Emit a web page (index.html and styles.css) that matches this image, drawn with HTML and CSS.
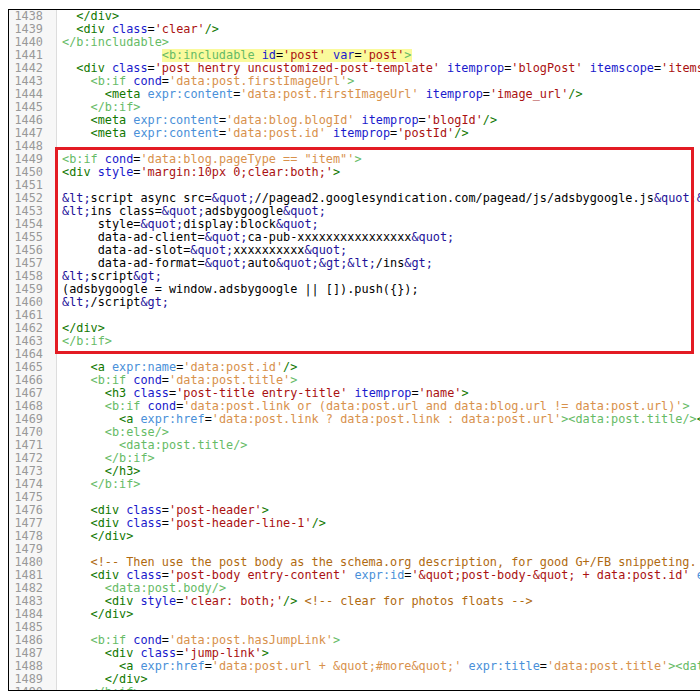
FILE: index.html
```html
<!DOCTYPE html>
<html lang="en">
<head>
    <meta charset="UTF-8">
    <meta name="viewport" content="width=device-width, initial-scale=1.0">
    <title>Template editor</title>
    <link rel="stylesheet" href="styles.css">
</head>
<body>
    <div class="editor">
        <div class="row"><div class="num">1438</div><div class="src">  <span class="tg">&lt;/div&gt;</span></div></div>
        <div class="row"><div class="num">1439</div><div class="src">  <span class="tg">&lt;div</span> <span class="at">class</span>=<span class="st">'clear'</span><span class="tg">/&gt;</span></div></div>
        <div class="row"><div class="num">1440</div><div class="src"><span class="bt">&lt;/b:includable&gt;</span></div></div>
        <div class="row"><div class="num">1441</div><div class="src">              <span class="hl"><span class="bt">&lt;b:includable</span> <span class="at">id</span>=<span class="st">'post'</span> <span class="at">var</span>=<span class="st">'post'</span><span class="bt">&gt;</span></span></div></div>
        <div class="row"><div class="num">1442</div><div class="src">  <span class="tg">&lt;div</span> <span class="at">class</span>=<span class="st">'post hentry uncustomized-post-template'</span> <span class="at">itemprop</span>=<span class="st">'blogPost'</span> <span class="at">itemscope</span>=<span class="st">'itemscope'</span> <span class="at">itemtype</span>=<span class="st">'http://schema.org/BlogPosting'</span><span class="tg">&gt;</span></div></div>
        <div class="row"><div class="num">1443</div><div class="src">    <span class="bt">&lt;b:if</span> <span class="at">cond</span>=<span class="ds">'data:post.firstImageUrl'</span><span class="bt">&gt;</span></div></div>
        <div class="row"><div class="num">1444</div><div class="src">      <span class="tg">&lt;meta</span> <span class="ex">expr:content</span>=<span class="ds">'data:post.firstImageUrl'</span> <span class="at">itemprop</span>=<span class="st">'image_url'</span><span class="tg">/&gt;</span></div></div>
        <div class="row"><div class="num">1445</div><div class="src">    <span class="bt">&lt;/b:if&gt;</span></div></div>
        <div class="row"><div class="num">1446</div><div class="src">    <span class="tg">&lt;meta</span> <span class="ex">expr:content</span>=<span class="ds">'data:blog.blogId'</span> <span class="at">itemprop</span>=<span class="st">'blogId'</span><span class="tg">/&gt;</span></div></div>
        <div class="row"><div class="num">1447</div><div class="src">    <span class="tg">&lt;meta</span> <span class="ex">expr:content</span>=<span class="ds">'data:post.id'</span> <span class="at">itemprop</span>=<span class="st">'postId'</span><span class="tg">/&gt;</span></div></div>
        <div class="row"><div class="num">1448</div><div class="src"></div></div>
        <div class="row"><div class="num">1449</div><div class="src"><span class="bt">&lt;b:if</span> <span class="at">cond</span>=<span class="ds">'data:blog.pageType == "item"'</span><span class="bt">&gt;</span></div></div>
        <div class="row"><div class="num">1450</div><div class="src"><span class="tg">&lt;div</span> <span class="at">style</span>=<span class="st">'margin:10px 0;clear:both;'</span><span class="tg">&gt;</span></div></div>
        <div class="row"><div class="num">1451</div><div class="src"></div></div>
        <div class="row"><div class="num">1452</div><div class="src"><span class="en">&amp;lt;</span>script async src=<span class="en">&amp;quot;</span>//pagead2.googlesyndication.com/pagead/js/adsbygoogle.js<span class="en">&amp;quot;</span><span class="en">&amp;gt;</span><span class="en">&amp;lt;</span>/script<span class="en">&amp;gt;</span></div></div>
        <div class="row"><div class="num">1453</div><div class="src"><span class="en">&amp;lt;</span>ins class=<span class="en">&amp;quot;</span>adsbygoogle<span class="en">&amp;quot;</span></div></div>
        <div class="row"><div class="num">1454</div><div class="src">     style=<span class="en">&amp;quot;</span>display:block<span class="en">&amp;quot;</span></div></div>
        <div class="row"><div class="num">1455</div><div class="src">     data-ad-client=<span class="en">&amp;quot;</span>ca-pub-xxxxxxxxxxxxxxxx<span class="en">&amp;quot;</span></div></div>
        <div class="row"><div class="num">1456</div><div class="src">     data-ad-slot=<span class="en">&amp;quot;</span>xxxxxxxxxx<span class="en">&amp;quot;</span></div></div>
        <div class="row"><div class="num">1457</div><div class="src">     data-ad-format=<span class="en">&amp;quot;</span>auto<span class="en">&amp;quot;</span><span class="en">&amp;gt;</span><span class="en">&amp;lt;</span>/ins<span class="en">&amp;gt;</span></div></div>
        <div class="row"><div class="num">1458</div><div class="src"><span class="en">&amp;lt;</span>script<span class="en">&amp;gt;</span></div></div>
        <div class="row"><div class="num">1459</div><div class="src">(adsbygoogle = window.adsbygoogle || []).push({});</div></div>
        <div class="row"><div class="num">1460</div><div class="src"><span class="en">&amp;lt;</span>/script<span class="en">&amp;gt;</span></div></div>
        <div class="row"><div class="num">1461</div><div class="src"></div></div>
        <div class="row"><div class="num">1462</div><div class="src"><span class="tg">&lt;/div&gt;</span></div></div>
        <div class="row"><div class="num">1463</div><div class="src"><span class="bt">&lt;/b:if&gt;</span></div></div>
        <div class="row"><div class="num">1464</div><div class="src"></div></div>
        <div class="row"><div class="num">1465</div><div class="src">    <span class="tg">&lt;a</span> <span class="ex">expr:name</span>=<span class="ds">'data:post.id'</span><span class="tg">/&gt;</span></div></div>
        <div class="row"><div class="num">1466</div><div class="src">    <span class="bt">&lt;b:if</span> <span class="at">cond</span>=<span class="ds">'data:post.title'</span><span class="bt">&gt;</span></div></div>
        <div class="row"><div class="num">1467</div><div class="src">      <span class="tg">&lt;h3</span> <span class="at">class</span>=<span class="st">'post-title entry-title'</span> <span class="at">itemprop</span>=<span class="st">'name'</span><span class="tg">&gt;</span></div></div>
        <div class="row"><div class="num">1468</div><div class="src">      <span class="bt">&lt;b:if</span> <span class="at">cond</span>=<span class="ds">'data:post.link or (data:post.url and data:blog.url != data:post.url)'</span><span class="bt">&gt;</span></div></div>
        <div class="row"><div class="num">1469</div><div class="src">        <span class="tg">&lt;a</span> <span class="ex">expr:href</span>=<span class="ds">'data:post.link ? data:post.link : data:post.url'</span><span class="bt">&gt;&lt;data:post.title/&gt;</span><span class="tg">&lt;/a&gt;</span></div></div>
        <div class="row"><div class="num">1470</div><div class="src">      <span class="bt">&lt;b:else/&gt;</span></div></div>
        <div class="row"><div class="num">1471</div><div class="src">        <span class="bt">&lt;data:post.title/&gt;</span></div></div>
        <div class="row"><div class="num">1472</div><div class="src">      <span class="bt">&lt;/b:if&gt;</span></div></div>
        <div class="row"><div class="num">1473</div><div class="src">      <span class="tg">&lt;/h3&gt;</span></div></div>
        <div class="row"><div class="num">1474</div><div class="src">    <span class="bt">&lt;/b:if&gt;</span></div></div>
        <div class="row"><div class="num">1475</div><div class="src"></div></div>
        <div class="row"><div class="num">1476</div><div class="src">    <span class="tg">&lt;div</span> <span class="at">class</span>=<span class="st">'post-header'</span><span class="tg">&gt;</span></div></div>
        <div class="row"><div class="num">1477</div><div class="src">    <span class="tg">&lt;div</span> <span class="at">class</span>=<span class="st">'post-header-line-1'</span><span class="tg">/&gt;</span></div></div>
        <div class="row"><div class="num">1478</div><div class="src">    <span class="tg">&lt;/div&gt;</span></div></div>
        <div class="row"><div class="num">1479</div><div class="src"></div></div>
        <div class="row"><div class="num">1480</div><div class="src">    <span class="cm">&lt;!-- Then use the post body as the schema.org description, for good G+/FB snippeting. --&gt;</span></div></div>
        <div class="row"><div class="num">1481</div><div class="src">    <span class="tg">&lt;div</span> <span class="at">class</span>=<span class="st">'post-body entry-content'</span> <span class="ex">expr:id</span>=<span class="st">'&amp;quot;post-body-&amp;quot; + data:post.id'</span> <span class="ex">expr:itemprop</span>=<span class="st">'description articleBody'</span><span class="tg">&gt;</span></div></div>
        <div class="row"><div class="num">1482</div><div class="src">      <span class="bt">&lt;data:post.body/&gt;</span></div></div>
        <div class="row"><div class="num">1483</div><div class="src">      <span class="tg">&lt;div</span> <span class="at">style</span>=<span class="st">'clear: both;'</span><span class="tg">/&gt;</span> <span class="cm">&lt;!-- clear for photos floats --&gt;</span></div></div>
        <div class="row"><div class="num">1484</div><div class="src">    <span class="tg">&lt;/div&gt;</span></div></div>
        <div class="row"><div class="num">1485</div><div class="src"></div></div>
        <div class="row"><div class="num">1486</div><div class="src">    <span class="bt">&lt;b:if</span> <span class="at">cond</span>=<span class="ds">'data:post.hasJumpLink'</span><span class="bt">&gt;</span></div></div>
        <div class="row"><div class="num">1487</div><div class="src">      <span class="tg">&lt;div</span> <span class="at">class</span>=<span class="st">'jump-link'</span><span class="tg">&gt;</span></div></div>
        <div class="row"><div class="num">1488</div><div class="src">        <span class="tg">&lt;a</span> <span class="ex">expr:href</span>=<span class="ds">'data:post.url + &amp;quot;#more&amp;quot;'</span> <span class="ex">expr:title</span>=<span class="ds">'data:post.title'</span><span class="bt">&gt;&lt;data:post.jumpText/&gt;</span><span class="tg">&lt;/a&gt;</span></div></div>
        <div class="row"><div class="num">1489</div><div class="src">      <span class="tg">&lt;/div&gt;</span></div></div>
        <div class="row"><div class="num">1490</div><div class="src">    <span class="bt">&lt;/b:if&gt;</span></div></div>

        <!-- red box drawn over the inserted ad code -->
        <div class="mark"></div>
    </div>
</body>
</html>
```

FILE: styles.css
```css
html, body {
    margin: 0;
    overflow: hidden;
    background: #fff;
}
body {
    padding: 9px 0 0 8px;
}
.editor {
    position: relative;
    width: 720px;
    height: 680px;
    border: 1px solid #000;
    border-right: 0;
    overflow: hidden;
    font-family: "DejaVu Sans Mono", monospace;
    font-size: 11.85px;
    line-height: 13px;
    color: #000;
}
.row {
    display: flex;
    height: 13px;
}
.num {
    flex: none;
    width: 48px;
    box-sizing: border-box;
    padding-right: 13px;
    text-align: right;
    color: #999;
    background: #f7f7f7;
    border-right: 1px solid #ddd;
}
.src {
    padding-left: 5px;
    white-space: pre;
}
.hl {
    display: inline-block;
    background: #fafa9c;
}
.tg { color: #117700; }
.bt { color: #66bb66; }
.at { color: #1a1acc; }
.ex { color: #4a90d9; }
.st { color: #aa1111; }
.ds { color: #d8914c; }
.cm { color: #b06a10; }
.en { color: #221199; }
.mark {
    position: absolute;
    left: 46px;
    top: 137px;
    width: 639px;
    height: 207px;
    box-sizing: border-box;
    border: 3px solid #e31b23;
}
```
